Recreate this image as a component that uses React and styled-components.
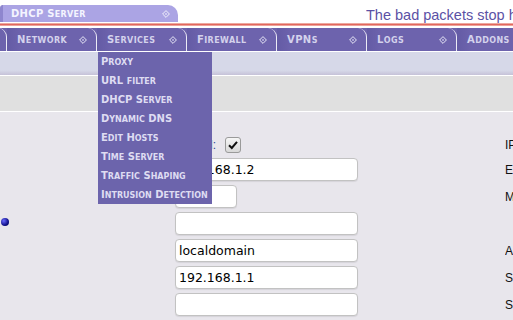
import React from "react";
import styled, { createGlobalStyle } from "styled-components";

const GlobalStyle = createGlobalStyle`
  html, body, #root {
    margin: 0;
    height: 100%;
  }
  body {
    background: #ffffff;
    font-family: "DejaVu Sans", Verdana, sans-serif;
    overflow: hidden;
  }
`;

const tabs = ["System", "Network", "Services", "Firewall", "VPNs", "Logs", "Addons"];

const menuItems = [
  "Proxy",
  "URL filter",
  "DHCP Server",
  "Dynamic DNS",
  "Edit Hosts",
  "Time Server",
  "Traffic Shaping",
  "Intrusion Detection",
];

const rows = [
  { side: "IP address start", check: true },
  { side: "End address", value: "192.168.1.2" },
  { side: "MAC address", value: "", small: true },
  { value: "", ball: true },
  { side: "Additional hosts", value: "localdomain" },
  { side: "Secondary DNS", value: "192.168.1.1" },
  { side: "Secondary WINS", value: "" },
];

// home made small caps: lower case runs are upper cased at a smaller size
const Caps = ({ text }) => {
  const parts = text.match(/[a-z]+|[^a-z]+/g) || [];
  return parts.map((p, i) =>
    /[a-z]/.test(p) ? <Low key={i}>{p.toUpperCase()}</Low> : <span key={i}>{p}</span>
  );
};

const Diamond = () => (
  <svg width="8" height="8" viewBox="0 0 8 8">
    <polygon points="4,0.6 7.4,4 4,7.4 0.6,4" fill="none" stroke="currentColor" strokeWidth="1" />
    <rect x="3.3" y="3.3" width="1.4" height="1.4" fill="currentColor" />
  </svg>
);

const App = () => {
  return (
    <>
      <GlobalStyle />
      <Page>
        <Header>
          <TitleTab>
            <span><Caps text="DHCP Server" /></span>
            <Diamond />
          </TitleTab>
          <Slogan>The bad packets stop here</Slogan>
        </Header>
        <RedRule />
        <NavWrap>
          <NavBar>
            {tabs.map((t, i) => (
              <NavTab key={t} $stub={i === 0}>
                <span><Caps text={t} /></span>
                <Diamond />
              </NavTab>
            ))}
          </NavBar>
          <Dropdown>
            {menuItems.map((m) => (
              <MenuItem key={m}><Caps text={m} /></MenuItem>
            ))}
          </Dropdown>
        </NavWrap>
        <SubBar />
        <InfoBar />
        <Content>
          <Form>
            {rows.map((r, i) => (
              <React.Fragment key={i}>
                <LeftCell>{r.ball && <Ball />}</LeftCell>
                <InputCell>
                  {r.check ? (
                    <>
                      <CheckLabel>Enabled:</CheckLabel>
                      <CheckBox>
                        <svg width="12" height="12" viewBox="0 0 12 12">
                          <path d="M2 6.2 L4.8 9 L10 2.8" fill="none" stroke="#111" strokeWidth="2" />
                        </svg>
                      </CheckBox>
                    </>
                  ) : (
                    <TextBox $small={r.small}>{r.value}</TextBox>
                  )}
                </InputCell>
                <SideLabel>{r.side}</SideLabel>
              </React.Fragment>
            ))}
          </Form>
        </Content>
      </Page>
    </>
  );
};

const Page = styled.div`
  display: flex;
  flex-direction: column;
  height: 100vh;
  overflow: hidden;
`;

const Low = styled.span`
  font-size: 0.8em;
`;

const Header = styled.div`
  display: flex;
  height: 23px;
  flex-shrink: 0;
`;

const TitleTab = styled.div`
  box-sizing: border-box;
  width: 178px;
  height: 17px;
  margin-top: 5px;
  display: flex;
  align-items: center;
  justify-content: space-between;
  padding: 0 8px 0 8px;
  background: #aba4e4;
  border-left: 3px solid #8e86ce;
  border-top-right-radius: 10px;
  border-top-left-radius: 3px;
  color: #f4f4ff;
  font-weight: bold;
  font-size: 10px;
  letter-spacing: 0.3px;
  svg {
    color: #f0f0fa;
  }
`;

const Slogan = styled.div`
  flex: 1;
  align-self: flex-end;
  margin-left: 188px;
  white-space: nowrap;
  overflow: hidden;
  font-family: "Liberation Sans", Arial, sans-serif;
  font-size: 14.5px;
  line-height: 16px;
  color: #5b51a5;
`;

const RedRule = styled.div`
  height: 3px;
  flex-shrink: 0;
  margin-bottom: 2px;
  background: linear-gradient(#f3c9c0, #e2675e 50%, #f2c0b6);
`;

const NavWrap = styled.div`
  position: relative;
  flex-shrink: 0;
`;

const NavBar = styled.div`
  display: flex;
  height: 23px;
  background: #6c62ac;
  overflow: hidden;
`;

const NavTab = styled.div`
  box-sizing: border-box;
  flex: 0 0 90px;
  margin-left: ${(p) => (p.$stub ? "-83px" : "0")};
  display: flex;
  align-items: center;
  justify-content: space-between;
  padding: 0 9px 0 10px;
  background: linear-gradient(to right, #645ba5, #6d63ad 14px);
  border-right: 1px solid #ecebf6;
  border-top-right-radius: 9px;
  color: #d4d2ec;
  font-weight: bold;
  font-size: 10px;
  letter-spacing: 0.4px;
  white-space: nowrap;
  svg {
    color: #e8e8f6;
    flex-shrink: 0;
  }
`;

const Dropdown = styled.div`
  position: absolute;
  top: calc(100% + 1px);
  left: 98px;
  width: 114px;
  background: #6c64ac;
  z-index: 5;
`;

const MenuItem = styled.div`
  height: 19px;
  line-height: 19px;
  padding-left: 3px;
  color: #dedcf2;
  font-weight: bold;
  font-size: 10px;
  letter-spacing: 0;
  white-space: nowrap;
`;

const SubBar = styled.div`
  flex-shrink: 0;
  height: 23px;
  border-top: 1px solid #ffffff;
  background: linear-gradient(#d6d8e8 80%, #c6c2d8);
`;

const InfoBar = styled.div`
  flex-shrink: 0;
  height: 35px;
  border-top: 1px solid #ffffff;
  border-bottom: 1px solid #ffffff;
  background: #e0e0e0;
`;

const Content = styled.div`
  flex: 1;
  background: #e8e6ec;
  padding-top: 21px;
`;

const Form = styled.div`
  display: grid;
  grid-template-columns: 175px 330px 1fr;
  grid-template-rows: 23px;
  grid-auto-rows: 27px;
`;

const LeftCell = styled.div`
  display: flex;
  align-items: center;
  padding-left: 1px;
`;

const Ball = styled.span`
  width: 8px;
  height: 8px;
  border-radius: 50%;
  margin-top: -3px;
  background: radial-gradient(circle at 35% 35%, #6a6aff, #10108a 60%, #000040);
`;

const InputCell = styled.div`
  display: flex;
  align-items: center;
`;

const CheckLabel = styled.span`
  width: 41px;
  display: flex;
  justify-content: flex-end;
  white-space: nowrap;
  font-family: "Liberation Sans", Arial, sans-serif;
  font-size: 12px;
  color: #2a4a9c;
`;

const CheckBox = styled.span`
  box-sizing: border-box;
  width: 16px;
  height: 16px;
  margin-left: 9px;
  display: flex;
  align-items: center;
  justify-content: center;
  border: 1px solid #9a9a9a;
  border-radius: 3px;
  background: linear-gradient(#f6f6f6, #d8d8d8);
`;

const TextBox = styled.div`
  box-sizing: border-box;
  width: ${(p) => (p.$small ? "62px" : "183px")};
  height: 23px;
  padding-left: 3px;
  display: flex;
  align-items: center;
  background: #ffffff;
  border: 1px solid #c2c2c2;
  border-radius: 4px;
  box-shadow: 0 1px 1px rgba(0, 0, 0, 0.08);
  font-family: "DejaVu Sans", Verdana, sans-serif;
  font-size: 12.5px;
  color: #000000;
  white-space: nowrap;
`;

const SideLabel = styled.div`
  display: flex;
  align-items: center;
  white-space: nowrap;
  overflow: hidden;
  font-family: "Liberation Sans", Arial, sans-serif;
  font-size: 12px;
  color: #111111;
`;

export default App;
